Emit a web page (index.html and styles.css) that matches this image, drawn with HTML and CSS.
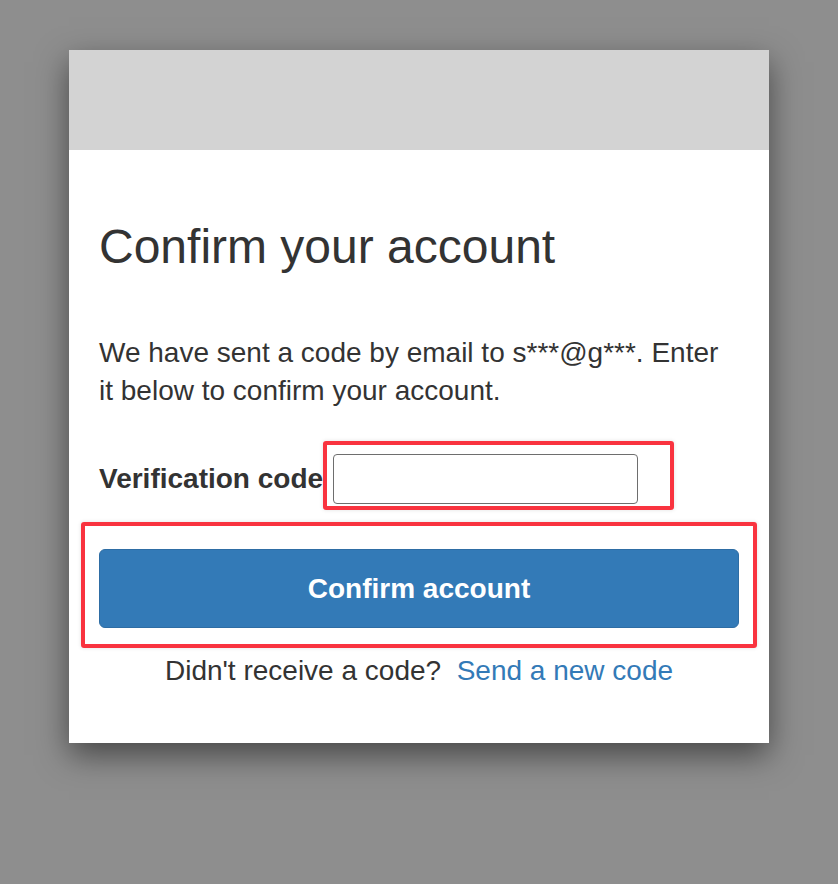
FILE: index.html
```html
<!DOCTYPE html>
<html lang="en">
<head>
    <meta charset="UTF-8">
    <meta name="viewport" content="width=device-width, initial-scale=1.0">
    <title>Confirm your account</title>
    <link rel="stylesheet" href="styles.css">
</head>
<body>
    <div class="modal">
        <div class="modal-header"></div>
        <div class="modal-body">
            <h1 class="title">Confirm your account</h1>
            <p class="info">We have sent a code by email to s***@g***. Enter it below to confirm your account.</p>
            <div class="field">
                <label for="code">Verification code</label>
                <span class="input-wrap">
                    <input type="text" id="code">
                    <span class="mark mark-input"></span>
                </span>
            </div>
            <div class="button-wrap">
                <button class="btn-primary">Confirm account</button>
                <span class="mark mark-button"></span>
            </div>
            <p class="resend">Didn't receive a code? &nbsp;<a href="#">Send a new code</a></p>
        </div>
    </div>
</body>
</html>
```

FILE: styles.css
```css
body {
    margin: 0;
    font-family: "Liberation Sans", Arial, sans-serif;
    background-color: #8e8e8e;
    height: 884px;
    overflow: hidden;
}
.modal {
    width: 700px;
    margin: 50px auto 0;
    background: white;
    box-shadow: 0 12px 30px rgba(0, 0, 0, 0.5);
}
.modal-header {
    height: 100px;
    background: #d3d3d3;
}
.modal-body {
    padding: 69px 30px 53px;
    color: #333;
}
.title {
    margin: 0;
    font-size: 48px;
    font-weight: normal;
    line-height: 55px;
}
.info {
    margin: 60px 0 0;
    font-size: 28px;
    line-height: 38px;
}
.field {
    display: flex;
    align-items: center;
    gap: 10px;
    margin-top: 44px;
}
.field label {
    font-size: 28px;
    font-weight: bold;
}
.input-wrap {
    position: relative;
    display: block;
}
.field input {
    display: block;
    box-sizing: border-box;
    width: 305px;
    height: 50px;
    border: 1px solid #6e6e6e;
    border-radius: 4px;
    font-size: 24px;
    padding: 0 10px;
}
.mark {
    position: absolute;
    border: 4px solid #f9333f;
    border-radius: 3px;
    box-shadow: 0 0 4px rgba(0, 0, 0, 0.12);
}
.mark-input {
    top: -13px;
    bottom: -6px;
    left: -10px;
    right: -36px;
}
.button-wrap {
    position: relative;
    margin-top: 45px;
}
.btn-primary {
    display: block;
    width: 100%;
    height: 79px;
    background: #337ab7;
    border: 1px solid #2e6da4;
    border-radius: 6px;
    color: white;
    font-family: inherit;
    font-size: 28px;
    font-weight: bold;
}
.mark-button {
    top: -27px;
    bottom: -20px;
    left: -18px;
    right: -18px;
}
.resend {
    margin: 24px 0 0;
    text-align: center;
    font-size: 28px;
    line-height: 38px;
}
.resend a {
    color: #337ab7;
    text-decoration: none;
}
```
